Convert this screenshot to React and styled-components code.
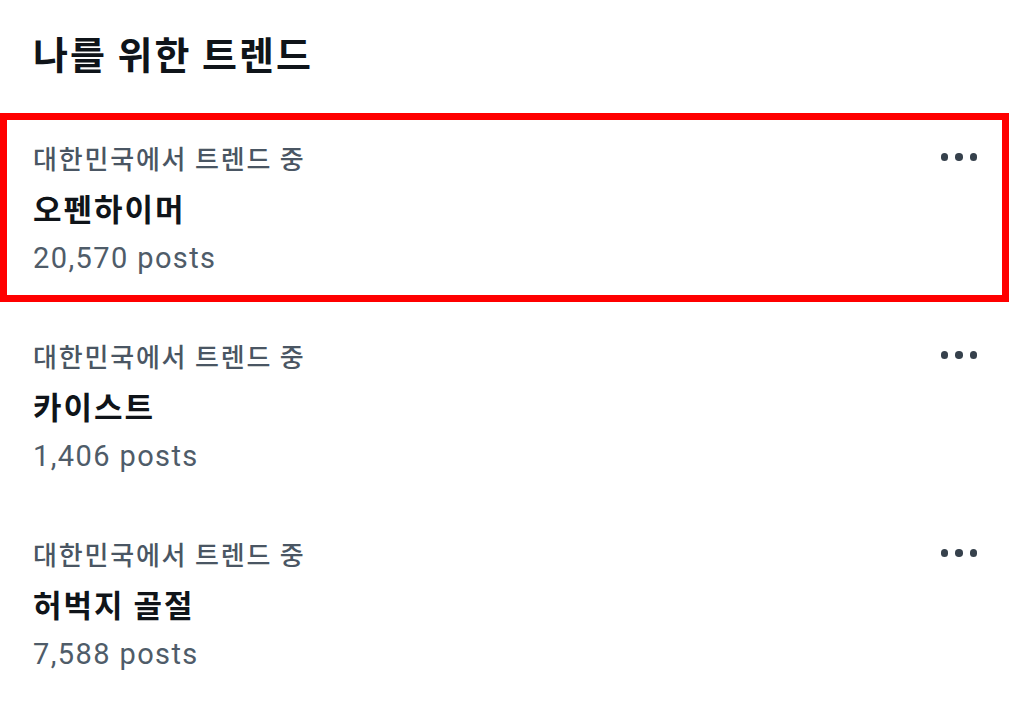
import React from "react";
import styled, { createGlobalStyle } from "styled-components";

const Global = createGlobalStyle`
  html, body { margin: 0; padding: 0; background: #ffffff; }
  body { font-family: "Noto Sans CJK KR", "Noto Sans", sans-serif; color: #0f1419; }
`;

const Page = styled.div`
  width: 1010px;
  display: flex;
  flex-direction: column;
`;

const Header = styled.h2`
  margin: 0;
  padding: 23px 33px 25px;
  font-size: 38px;
  line-height: 60px;
  font-weight: 700;
  letter-spacing: 2px;
  color: #0f1419;
`;

const Row = styled.div`
  position: relative;
  display: flex;
  align-items: flex-start;
  justify-content: space-between;
  padding: 25px 33px 23px;
  ${(p) =>
    p.$highlight &&
    `
    &::after {
      content: "";
      position: absolute;
      top: 5px;
      bottom: 4px;
      left: 0;
      right: 1px;
      border: 7px solid #ff0000;
      pointer-events: none;
    }
  `}
`;

const Info = styled.div`
  display: flex;
  flex-direction: column;
`;

const Label = styled.div`
  font-size: 26px;
  line-height: 50px;
  font-weight: 500;
  color: #4a5663;
  letter-spacing: 1.8px;
`;

const Name = styled.div`
  font-size: 31px;
  line-height: 50px;
  font-weight: 700;
  color: #0f1419;
  letter-spacing: 2px;
`;

const Count = styled.div`
  font-family: "Roboto", "Noto Sans", sans-serif;
  font-size: 29px;
  line-height: 50px;
  color: #4f5c69;
  letter-spacing: 1.4px;
`;

const More = styled.div`
  height: 50px;
  display: flex;
  align-items: center;
  gap: 7px;
  margin-top: -1px;
`;

const Dot = styled.span`
  width: 7.5px;
  height: 7.5px;
  border-radius: 50%;
  background: #36414c;
`;

const trends = [
  { name: "오펜하이머", count: "20,570 posts", highlight: true },
  { name: "카이스트", count: "1,406 posts" },
  { name: "허벅지 골절", count: "7,588 posts" },
];

export default function App() {
  return (
    <Page>
      <Global />
      <Header>나를 위한 트렌드</Header>
      {trends.map((t) => (
        <Row key={t.name} $highlight={t.highlight}>
          <Info>
            <Label>대한민국에서 트렌드 중</Label>
            <Name>{t.name}</Name>
            <Count>{t.count}</Count>
          </Info>
          <More>
            <Dot />
            <Dot />
            <Dot />
          </More>
        </Row>
      ))}
    </Page>
  );
}
